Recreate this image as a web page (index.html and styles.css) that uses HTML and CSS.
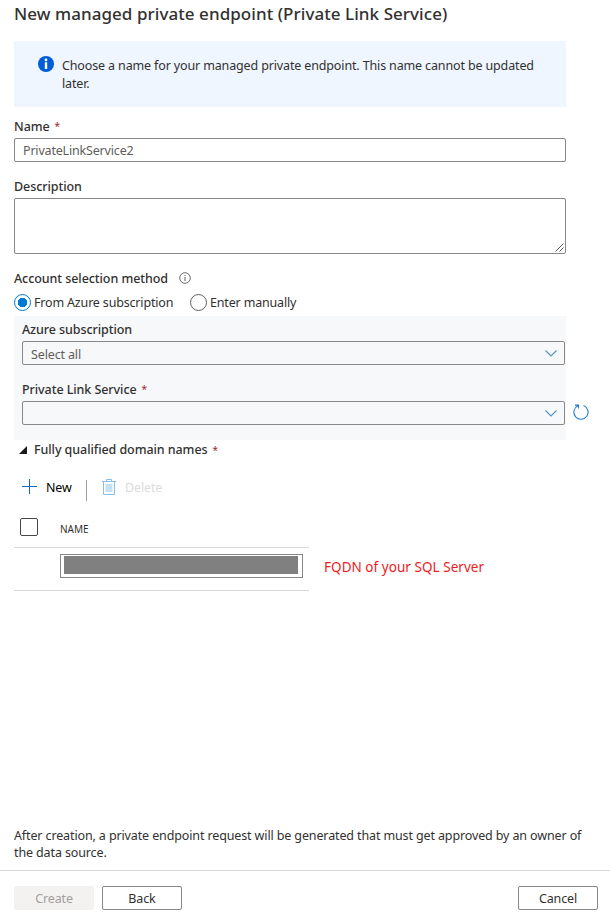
FILE: index.html
```html
<!DOCTYPE html>
<html lang="en">
<head>
<meta charset="utf-8">
<title>New managed private endpoint</title>
<link rel="stylesheet" href="styles.css">
</head>
<body>
<main class="panel">
  <h1 class="title"><span>New managed private endpoint (Private Link Service)</span></h1>
  <div class="notice">
    <svg class="notice-icon" width="16" height="16" viewBox="0 0 16 16"><circle cx="8" cy="8" r="8" fill="#015cda"/><circle cx="8" cy="3.9" r="1.4" fill="#fff"/><path d="M6.800 6.200h2.400v6.800H6.800z" fill="#fff"/></svg>
    <p class="notice-text">Choose a name for your managed private endpoint. This name cannot be updated<br>later.</p>
  </div>
  <div class="label name-label"><span>Name</span><span class="req">*</span></div>
  <div class="input">PrivateLinkService2</div>
  <div class="label desc-label"><span>Description</span></div>
  <div class="textarea"><svg width="9" height="9" viewBox="0 0 9 9" stroke="#444" stroke-width=".9"><path d="M.5 8.500l8-8M4.500 8.500l4-4"/></svg></div>
  <div class="label account-label"><span class="account-text">Account selection method</span>
    <svg class="hint" width="12" height="12" viewBox="0 0 12 12" fill="none" stroke="#605e5c"><circle cx="6" cy="6" r="5.300" stroke-width=".9"/><path d="M6 5v4M6 3v1.100"/></svg>
  </div>
  <div class="radios">
    <span class="radio checked"></span><span class="radio-text first">From Azure subscription</span>
    <span class="radio"></span><span class="radio-text second">Enter manually</span>
  </div>
  <section class="source">
    <div class="label"><span>Azure subscription</span></div>
    <div class="select"><span class="value">Select all</span><svg width="12" height="7" viewBox="0 0 12 7" fill="none" stroke="#4f94c4" stroke-width="1.1"><path d="M.5.500L6 6l5.500-5.500"/></svg></div>
    <div class="label service-label"><span>Private Link Service</span><span class="req">*</span></div>
    <div class="service-row">
      <div class="select"><span></span><svg width="12" height="7" viewBox="0 0 12 7" fill="none" stroke="#4f94c4" stroke-width="1.1"><path d="M.5.500L6 6l5.500-5.500"/></svg></div>
      <svg class="refresh" width="16" height="16" viewBox="0 0 16 16" fill="none" stroke="#2179ca" stroke-width="1.1"><path d="M10.500 1.500A7.100 7.100 0 1 1 4.800 1.800M2 1.100h3.500v3.500"/></svg>
    </div>
  </section>
  <div class="label domains"><svg width="8" height="8" viewBox="0 0 8 8"><path d="M8 0v8H0z" fill="#1b1a19"/></svg><span class="domains-text">Fully qualified domain names</span><span class="req">*</span></div>
  <div class="toolbar">
    <svg class="plus" width="15" height="15" viewBox="0 0 15 15"><path d="M7.500 0v15M0 7.500h15" stroke="#0f6cbd"/></svg>
    <span class="new">New</span>
    <span class="divider"></span>
    <svg class="trash" width="14" height="16" viewBox="0 0 14 16" fill="none" stroke="#83bfe9"><path d="M0 2.500h14M4.500 2V.500h5V2M1.500 3v12.500h11V3"/><path d="M3.500 5h7v8h-7z" fill="#c7e1f4" stroke="none"/></svg>
    <span class="delete">Delete</span>
  </div>
  <div class="table">
    <div class="table-head"><span class="checkbox"></span><span class="column">NAME</span></div>
    <div class="table-row">
      <div class="cell"><div class="domain"><div class="redacted"></div></div></div>
      <span class="annotation">FQDN of your SQL Server</span>
    </div>
  </div>
</main>
<p class="note">After creation, a private endpoint request will be generated that must get approved by an owner of<br>the data source.</p>
<footer class="footer">
  <span class="button disabled">Create</span>
  <span class="button">Back</span>
  <span class="button cancel">Cancel</span>
</footer>
</body>
</html>
```

FILE: styles.css
```css
* { box-sizing: border-box; }
body {
  margin: 0; height: 914px; display: flex; flex-direction: column; overflow: hidden;
  font: 12.5px/18px "Noto Sans", "Open Sans", sans-serif; letter-spacing: -.14px; color: #323130; background: #fff;
  white-space: nowrap;
}
svg { display: block; flex: none; }
.panel { width: 552px; margin-left: 14px; }
.title { margin: 0; height: 41px; font-size: 17px; line-height: 28px; font-weight: 500; letter-spacing: .06px; }
.notice { display: flex; height: 66px; padding: 15px 24px; background: #eff6ff; gap: 8px; }
.notice-text { margin: 0; padding-top: 1px; }
.label { display: flex; height: 20px; line-height: 22px; font-weight: 500; letter-spacing: -.07px; }
.req { margin-left: 5px; color: #a4262c; font-weight: 400; font-size: 10px; line-height: 20px; }
.name-label { margin-top: 9px; }
.input { margin-top: 2px; height: 24px; padding-left: 8px; border: 1px solid #8a8886; border-radius: 2px; line-height: 23px; color: #605e5c; letter-spacing: -.18px; }
.desc-label { margin-top: 14px; }
.textarea { margin-top: 2px; height: 56px; border: 1px solid #8a8886; border-radius: 2px; display: flex; justify-content: flex-end; align-items: flex-end; padding: 1px; }
.account-label { margin-top: 14px; }
.hint { margin: 4px 0 0 11px; }
.radios { display: flex; align-items: center; height: 28px; }
.radio { width: 17px; height: 17px; border: 1px solid #605e5c; border-radius: 50%; }
.radio.checked { border-color: #0078d4; background: radial-gradient(circle, #0078d4 4.500px, #fff 5px); }
.radio-text { margin-left: 3px; padding-top: 2px; letter-spacing: -.17px; }
.radio-text.first { width: 156px; }
.source { height: 124px; padding: 3px 1px 0 8px; background: #f6f8fa; }
.select { width: 543px; height: 24px; flex: none; display: flex; align-items: center; justify-content: space-between; border: 1px solid #8a8886; border-radius: 2px; padding: 0 7px 0 8px; color: #605e5c; margin-top: 2px; }
.value { padding-top: 3px; }
.service-label { margin-top: 14px; }
.service-row { display: flex; align-items: center; }
.refresh { margin-left: 8px; }
.domains { padding-left: 5px; line-height: 20px; }
.domains svg { margin-top: 6px; }
.domains-text { margin-left: 7px; }
.toolbar { display: flex; align-items: center; height: 54px; padding-left: 8px; }
.plus { margin-top: -1px; }
.new { width: 40px; margin-left: 9px; padding-top: 1px; color: #000; }
.divider { width: 1px; height: 21px; margin-top: 6px; background: #a19f9d; }
.trash { margin-left: 15px; }
.delete { margin-left: 9px; padding-top: 1px; color: #dddbda; }
.table { width: 295px; }
.table-head { display: flex; align-items: center; height: 34px; padding-left: 6px; border-bottom: 1px solid #d8d8d8; }
.checkbox { width: 18px; height: 18px; border: 1px solid #484644; border-radius: 2px; margin-bottom: 7px; }
.column { margin: -3px 0 0 22px; font-size: 10px; letter-spacing: 0; }
.table-row { display: flex; align-items: center; height: 43px; }
.cell { width: 295px; height: 43px; flex: none; padding: 6px 0 0 46px; border-bottom: 1px solid #d8d8d8; }
.domain { width: 243px; height: 24px; border: 1px solid #8a8886; padding: 1px 4px 3px 3px; }
.redacted { height: 18px; background: #808080; }
.annotation { margin-left: 15px; color: #ed1c24; margin-top: -6px; font-size: 13.5px; letter-spacing: .04px; }
.note { margin: auto 0 9px 14px; line-height: 17px; letter-spacing: -.125px; }
.footer { display: flex; height: 44px; border-top: 1px solid #d8d8d8; padding: 15px 12px 0 14px; gap: 8px; }
.button { width: 80px; height: 24px; line-height: 24px; text-align: center; border: 1px solid #8a8886; border-radius: 2px; }
.disabled { background: #f3f2f1; border-color: #f3f2f1; color: #a19f9d; }
.cancel { margin-left: auto; }
```
